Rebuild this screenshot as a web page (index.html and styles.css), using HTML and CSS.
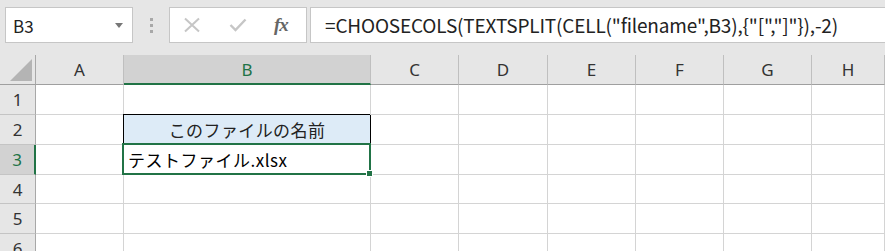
FILE: index.html
```html
<!DOCTYPE html>
<html>
<head>
	<title>Excel CHOOSECOLS</title>
	<link rel="stylesheet" href="styles.css">
</head>
<body>
<div class="toolbar">
	<div class="namebox">
		<span>B3</span>
		<i class="arrow"></i>
	</div>
	<div class="grip"><i></i><i></i><i></i></div>
	<div class="fxbox">
		<svg class="ico" width="18" height="16" viewBox="0 0 18 16"><path d="M2 1.5 L16 14.5 M16 1.5 L2 14.5" stroke="#c6c6c6" stroke-width="2" fill="none"/></svg>
		<svg class="ico" width="18" height="14" viewBox="0 0 18 14"><path d="M1.5 7 L6.5 12 L16.5 1.5" stroke="#c6c6c6" stroke-width="2.4" fill="none"/></svg>
		<span class="fx">fx</span>
	</div>
	<div class="formula">=CHOOSECOLS(TEXTSPLIT(CELL("filename",B3),{"[","]"}),-2)</div>
</div>

<div class="sheet">
	<div class="hd corner"><svg width="24" height="24" viewBox="0 0 24 24"><path d="M23 1 L23 23 L1 23 Z" fill="#b4b4b4"/></svg></div>
	<div class="hd col">A</div>
	<div class="hd col on">B</div>
	<div class="hd col">C</div>
	<div class="hd col">D</div>
	<div class="hd col">E</div>
	<div class="hd col">F</div>
	<div class="hd col">G</div>
	<div class="hd col">H</div>

	<div class="hd row">1</div>
	<div class="c"></div><div class="c"></div><div class="c"></div><div class="c"></div><div class="c"></div><div class="c"></div><div class="c"></div><div class="c"></div>

	<div class="hd row">2</div>
	<div class="c"></div>
	<div class="c title">このファイルの名前</div>
	<div class="c"></div><div class="c"></div><div class="c"></div><div class="c"></div><div class="c"></div><div class="c"></div>

	<div class="hd row on">3</div>
	<div class="c"></div>
	<div class="c active">テストファイル.xlsx<i class="handle"></i></div>
	<div class="c"></div><div class="c"></div><div class="c"></div><div class="c"></div><div class="c"></div><div class="c"></div>

	<div class="hd row">4</div>
	<div class="c"></div><div class="c"></div><div class="c"></div><div class="c"></div><div class="c"></div><div class="c"></div><div class="c"></div><div class="c"></div>

	<div class="hd row">5</div>
	<div class="c"></div><div class="c"></div><div class="c"></div><div class="c"></div><div class="c"></div><div class="c"></div><div class="c"></div><div class="c"></div>

	<div class="hd row">6</div>
	<div class="c"></div><div class="c"></div><div class="c"></div><div class="c"></div><div class="c"></div><div class="c"></div><div class="c"></div><div class="c"></div>
</div>
</body>
</html>
```

FILE: styles.css
```css
* {
	padding: 0px;
	margin: 0px;
	box-sizing: border-box;
}
html, body {
	height: 251px;
	overflow: hidden;
}
body {
	background: #e6e6e6;
	font-family: "Noto Sans CJK JP", "Noto Sans", sans-serif;
	color: #000;
}

/* formula bar */
.toolbar {
	display: flex;
	align-items: flex-start;
	height: 55px;
	padding: 7px 0 0 5px;
}
.namebox {
	width: 128px;
	height: 36px;
	background: #fff;
	border: 1px solid #c6c6c6;
	display: flex;
	align-items: center;
	justify-content: space-between;
	padding: 0 9px 0 7px;
	font-size: 17px;
	color: #222;
}
.namebox .arrow {
	width: 0;
	height: 0;
	border-left: 4px solid transparent;
	border-right: 4px solid transparent;
	border-top: 5px solid #777;
}
.grip {
	width: 36px;
	height: 36px;
	display: flex;
	flex-direction: column;
	align-items: center;
	justify-content: center;
	gap: 3px;
}
.grip i {
	width: 3px;
	height: 3px;
	background: #a8a8a8;
}
.fxbox {
	width: 138px;
	height: 36px;
	background: #fff;
	border: 1px solid #c6c6c6;
	display: flex;
	align-items: center;
	padding-left: 13px;
	gap: 28px;
}
.fx {
	font-family: "Liberation Serif", "DejaVu Serif", serif;
	font-style: italic;
	font-weight: bold;
	font-size: 19px;
	color: #666;
	margin-left: -1px;
	letter-spacing: -1px;
}
.formula {
	flex: 1;
	height: 36px;
	margin-left: 3px;
	margin-right: -10px;
	background: #fff;
	border: 1px solid #c6c6c6;
	padding-left: 14px;
	line-height: 33px;
	font-size: 19px;
	letter-spacing: -0.17px;
	white-space: nowrap;
	color: #222;
}

/* grid */
.sheet {
	display: grid;
	grid-template-columns: 36px 88px 247px 88px 89px 88px 88px 88px 1fr;
	grid-template-rows: 30px 30px 30px 30px 29px 30px 30px;
	background: #fff;
}
.hd {
	background: #e6e6e6;
	display: flex;
	align-items: center;
	justify-content: center;
	font-family: "Noto Sans", "Noto Sans CJK JP", sans-serif;
	font-size: 17px;
	color: #333;
}
.hd.col {
	border-right: 1px solid #bfbfbf;
	border-bottom: 1px solid #9f9f9f;
}
.hd.row {
	border-right: 1px solid #a8a8a8;
	border-bottom: 1px solid #c4c4c4;
}
.hd.corner {
	border-right: 1px solid #a8a8a8;
	border-bottom: 1px solid #9f9f9f;
	align-items: flex-end;
	justify-content: flex-end;
	padding: 0 2px 2px 0;
}
.hd.col.on {
	background: #d2d2d2;
	color: #217346;
	border-bottom: 2px solid #217346;
}
.hd.row.on {
	background: #d2d2d2;
	color: #217346;
	border-right: 2px solid #217346;
}
.c {
	border-right: 1px solid #d4d4d4;
	border-bottom: 1px solid #d4d4d4;
	font-size: 17px;
	white-space: nowrap;
	display: flex;
	align-items: center;
}
.c.title {
	background: #ddebf7;
	border-right-color: #000;
	border-bottom-color: #000;
	box-shadow: -1px -1px 0 #000;
	justify-content: center;
	letter-spacing: 0.4px;
	color: #222;
}
.c.active {
	position: relative;
	padding-left: 4px;
	letter-spacing: 0.5px;
}
.c.active:after {
	content: '';
	position: absolute;
	left: -2px;
	top: -2px;
	right: -1px;
	bottom: -1px;
	border: 2px solid #217346;
}
.c.active .handle {
	position: absolute;
	right: -3px;
	bottom: -3px;
	width: 7px;
	height: 7px;
	background: #217346;
	border: 1px solid #fff;
	z-index: 1;
}
```
